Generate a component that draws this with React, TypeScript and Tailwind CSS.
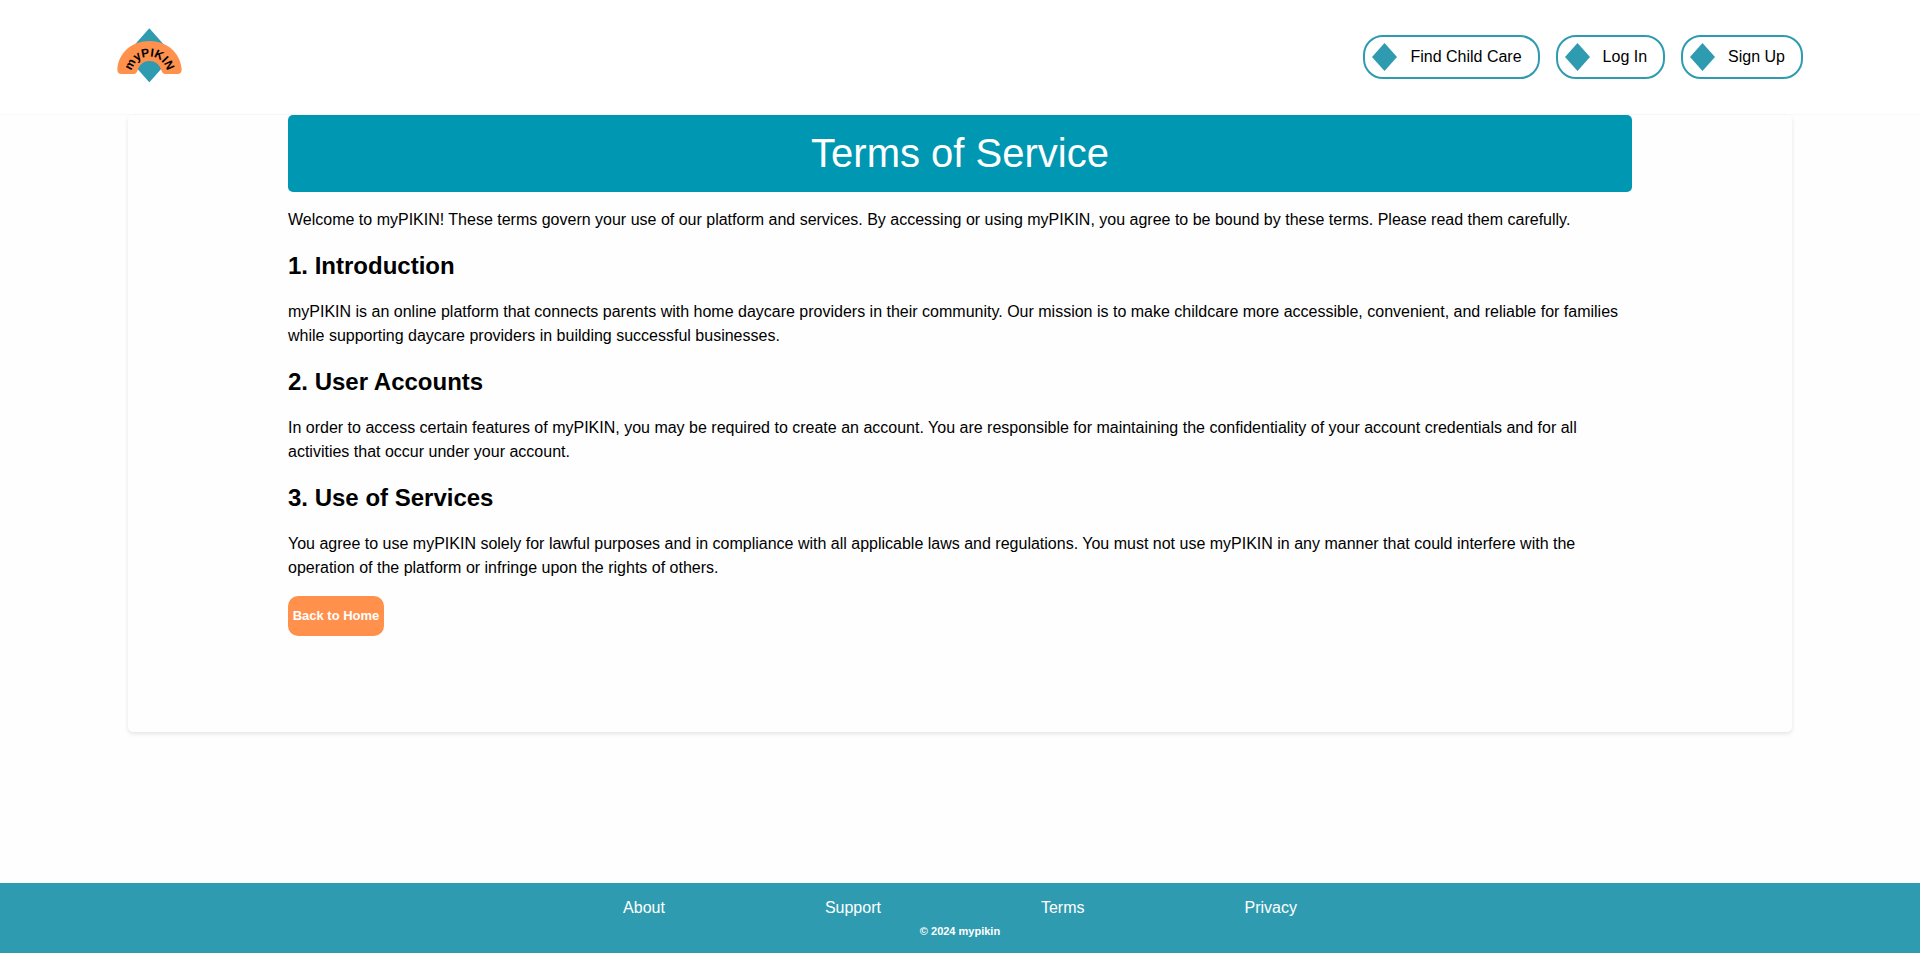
const navLinks = ["Find Child Care", "Log In", "Sign Up"];
const footerLinks = ["About", "Support", "Terms", "Privacy"];

const sections = [
  {
    title: "1. Introduction",
    body: "myPIKIN is an online platform that connects parents with home daycare providers in their community. Our mission is to make childcare more accessible, convenient, and reliable for families while supporting daycare providers in building successful businesses.",
  },
  {
    title: "2. User Accounts",
    body: "In order to access certain features of myPIKIN, you may be required to create an account. You are responsible for maintaining the confidentiality of your account credentials and for all activities that occur under your account.",
  },
  {
    title: "3. Use of Services",
    body: "You agree to use myPIKIN solely for lawful purposes and in compliance with all applicable laws and regulations. You must not use myPIKIN in any manner that could interfere with the operation of the platform or infringe upon the rights of others.",
  },
];

function Logo() {
  return (
    <svg viewBox="51 54 195 162" className="h-[54px] w-[65px]" role="img" aria-label="myPIKIN">
      <path d="M148 55 L220 136 L148 217 L76 136 Z" fill="#2f9bb0" />
      <path
        d="M52 177 C56 128 96 93 148 93 C200 93 241 128 245 177 Q246 192 232 192 L196 192 Q188 192 185 183 C179 163 166 153 148 153 C131 153 118 163 112 183 Q109 192 101 192 L65 192 Q51 192 52 177 Z"
        fill="#ff914d"
      />
      <path id="logo-arc" d="M94 205 L94 194 A54 54 0 0 1 202 194 L202 205" fill="none" />
      <text
        fontSize="36"
        fontWeight="700"
        textAnchor="middle"
        fill="#000"
        className="font-['Liberation_Sans',sans-serif]"
      >
        <textPath href="#logo-arc" startOffset="50%">
          myPIKIN
        </textPath>
      </text>
    </svg>
  );
}

function Diamond() {
  return (
    <svg viewBox="0 0 25 28" className="h-7 w-[25px]" aria-hidden="true">
      <path d="M12.5 0 L25 14 L12.5 28 L0 14 Z" fill="#2f9bb0" />
    </svg>
  );
}

export default function App() {
  return (
    <div className="flex min-h-screen flex-col bg-[#fefefe] font-['Liberation_Sans',Arial,sans-serif] text-base text-black">
      <header className="flex h-[115px] items-center justify-between border-b border-[#faf9f3] bg-white px-[117px]">
        <a href="#home" className="-mt-1">
          <Logo />
        </a>
        <nav className="flex gap-4">
          {navLinks.map((label) => (
            <a
              key={label}
              href="#"
              className="flex h-11 items-center gap-[13px] rounded-[20px] border-2 border-[#2f9bb0] pr-4 pl-[7px]"
            >
              <Diamond />
              {label}
            </a>
          ))}
        </nav>
      </header>

      <main className="mx-32 rounded-[5px] px-40 pb-24 shadow-[0_2px_4px_rgba(0,0,0,0.1)]">
        <h1 className="rounded-[5px] bg-[#0097b2] py-2 text-center text-[40px] leading-[61px] text-white">
          Terms of Service
        </h1>
        <p className="mt-4">
          Welcome to myPIKIN! These terms govern your use of our platform and services. By accessing or using myPIKIN,
          you agree to be bound by these terms. Please read them carefully.
        </p>
        {sections.map((section) => (
          <section key={section.title} className="mt-4">
            <h2 className="mb-4 text-2xl leading-9 font-bold">{section.title}</h2>
            <p>{section.body}</p>
          </section>
        ))}
        <button
          type="button"
          className="mt-4 block h-10 w-24 rounded-[10px] bg-[#ff914d] text-[13px] font-bold whitespace-nowrap text-white"
        >
          Back to Home
        </button>
      </main>

      <footer className="mt-auto bg-[#2f9bb0] pt-[13px] pb-[11px] text-center text-white">
        <nav className="flex justify-center gap-40">
          {footerLinks.map((label) => (
            <a key={label} href="#">
              {label}
            </a>
          ))}
        </nav>
        <p className="text-[11px] leading-[22px] font-bold">© 2024 mypikin</p>
      </footer>
    </div>
  );
}
